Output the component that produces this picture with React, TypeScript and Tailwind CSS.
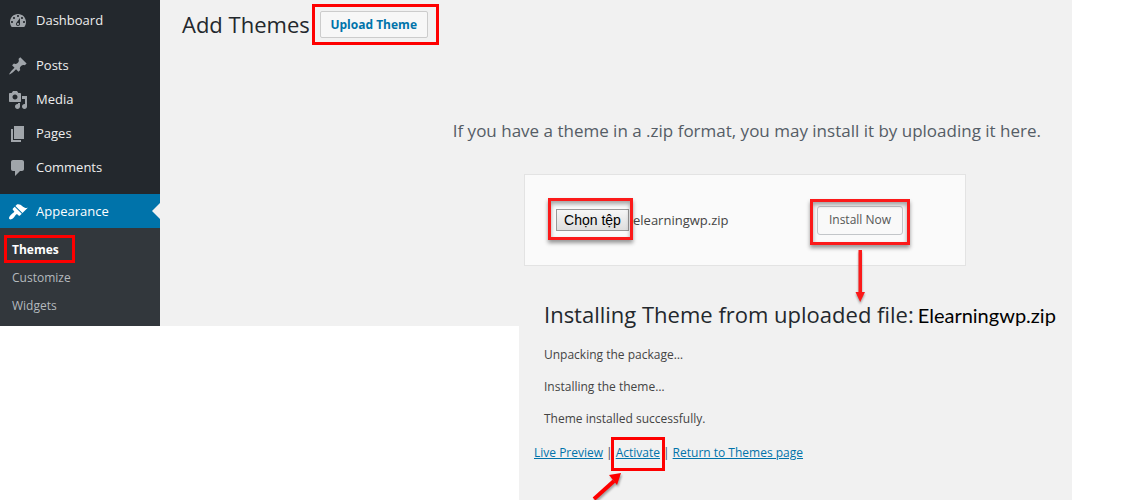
import { useRef } from 'react';
import type { ReactNode } from 'react';

const icons = {
  dashboard:
    'M3.76 16h12.48c1.1-1.37 1.76-3.11 1.76-5 0-4.42-3.58-8-8-8s-8 3.58-8 8c0 1.89.66 3.63 1.76 5zM10 4c.55 0 1 .45 1 1s-.45 1-1 1-1-.45-1-1 .45-1 1-1zM6 6c.55 0 1 .45 1 1s-.45 1-1 1-1-.45-1-1 .45-1 1-1zm8 0c.55 0 1 .45 1 1s-.45 1-1 1-1-.45-1-1 .45-1 1-1zm-5.37 5.55L12 7v6c0 1.1-.9 2-2 2s-2-.9-2-2c0-.57.24-1.08.63-1.45zM4 10c.55 0 1 .45 1 1s-.45 1-1 1-1-.45-1-1 .45-1 1-1zm12 0c.55 0 1 .45 1 1s-.45 1-1 1-1-.45-1-1 .45-1 1-1zm-5 3c0-.55-.45-1-1-1s-1 .45-1 1 .45 1 1 1 1-.45 1-1z',
  posts:
    'M10.44 3.02l1.82-1.82 6.36 6.35-1.83 1.82c-1.05-.68-2.48-.57-3.41.36l-.75.75c-.92.93-1.04 2.35-.35 3.41l-1.83 1.82-2.41-2.41-2.8 2.79c-.42.42-3.38 2.71-3.8 2.29s1.86-3.39 2.28-3.81l2.79-2.79L4.1 9.36l1.83-1.82c1.05.69 2.48.57 3.4-.36l.75-.75c.93-.92 1.05-2.35.36-3.41z',
  media:
    'M13 11V4c0-.55-.45-1-1-1h-1.67L9 1H5L3.67 3H2c-.55 0-1 .45-1 1v7c0 .55.45 1 1 1h10c.55 0 1-.45 1-1zM7 4.5c1.38 0 2.5 1.12 2.5 2.5S8.38 9.5 7 9.5 4.5 8.38 4.5 7 5.62 4.5 7 4.5zM14 6h5v10.5c0 1.38-1.12 2.5-2.5 2.5S14 17.88 14 16.5s1.12-2.5 2.5-2.5c.17 0 .34.02.5.05V9h-3V6zm-4 8.05V13h2v3.5c0 1.38-1.12 2.5-2.5 2.5S7 17.88 7 16.5 8.12 14 9.5 14c.17 0 .34.02.5.05z',
  pages: 'M6 15V2h10v13H6zm-1 1h8v2H3V5h2v11z',
  comments:
    'M5 2h9c1.1 0 2 .9 2 2v7c0 1.1-.9 2-2 2h-2l-5 5v-5H5c-1.1 0-2-.9-2-2V4c0-1.1.9-2 2-2z',
  appearance:
    'M14.48 11.06L7.41 3.99l1.5-1.5c.5-.56 2.3-.47 3.51.32 1.21.8 1.43 1.28 2.91 2.1 1.18.64 2.45 1.26 4.45.85zm-.71.71L6.7 4.7 4.93 6.47c-.39.39-.39 1.02 0 1.41l1.06 1.06c.39.39.39 1.03 0 1.42-.6.6-1.43 1.11-2.21 1.69-.35.26-.7.53-1.01.84C1.43 14.23.4 16.08 1.4 17.07c.99 1 2.84-.03 4.18-1.36.31-.31.58-.66.85-1.02.57-.78 1.08-1.61 1.69-2.21.39-.39 1.02-.39 1.41 0l1.06 1.06c.39.39 1.02.39 1.41 0z',
};

function MenuItem({ icon, active, children }: { icon: keyof typeof icons; active?: boolean; children: ReactNode }) {
  return (
    <li className={active ? 'relative bg-[#0073aa]' : ''}>
      <a
        href="#"
        className={`flex h-[34px] items-center gap-2 pl-2 text-[13px] ${active ? 'pt-0.5 text-white' : 'text-[#eee]'}`}
      >
        <svg viewBox="0 0 20 20" className={`size-5 ${active ? 'fill-white' : 'fill-[#a0a5aa]'}`} aria-hidden="true">
          <path d={icons[icon]} />
        </svg>
        {children}
      </a>
      {active && (
        <span className="absolute top-1/2 right-0 -translate-y-1/2 border-8 border-l-0 border-transparent border-r-[#f1f1f1]" />
      )}
    </li>
  );
}

/* Red marker frame laid over the control it wraps. */
function Marker({ place, shadow }: { place: string; shadow?: boolean }) {
  return (
    <span
      aria-hidden="true"
      className={`pointer-events-none absolute border-3 ${
        shadow
          ? 'border-[#fb1a1a] shadow-[0_3px_4px_rgba(0,0,0,0.4),inset_0_3px_4px_rgba(0,0,0,0.35)]'
          : 'border-[#fe0000]'
      } ${place}`}
    />
  );
}

function Sidebar() {
  return (
    <nav className="w-40 shrink-0 self-start bg-[#23282d] pt-1">
      <ul>
        <MenuItem icon="dashboard">Dashboard</MenuItem>
        <li className="h-[11px]" />
        <MenuItem icon="posts">Posts</MenuItem>
        <MenuItem icon="media">Media</MenuItem>
        <MenuItem icon="pages">Pages</MenuItem>
        <MenuItem icon="comments">Comments</MenuItem>
        <li className="h-[9px]" />
        <MenuItem icon="appearance" active>
          Appearance
        </MenuItem>
      </ul>
      <ul className="bg-[#32373c] pt-2 pb-1.5 text-xs leading-7 text-[#b4b9be]">
        <li className="relative h-7 pl-3">
          <a href="#" className="font-bold text-white">
            Themes
          </a>
          <Marker place="-top-px bottom-px left-1 w-[71px]" />
        </li>
        <li className="h-7 pl-3">
          <a href="#">Customize</a>
        </li>
        <li className="h-7 pl-3">
          <a href="#">Widgets</a>
        </li>
      </ul>
    </nav>
  );
}

function UploadForm() {
  const file = useRef<HTMLInputElement>(null);
  return (
    <form
      onSubmit={(e) => e.preventDefault()}
      className="mr-[106px] ml-auto flex h-[92px] w-[442px] items-center border border-[#e3e3e3] bg-[#fafafa] pl-[31px] text-[13px] text-[#444]"
    >
      <input ref={file} type="file" aria-label="Theme zip file" className="hidden" />
      <div className="relative">
        <button
          type="button"
          onClick={() => file.current?.click()}
          className="flex h-[22px] w-[73px] items-center justify-center border border-[#999] bg-linear-to-b from-[#f6f6f6] to-[#dedede] font-['Liberation_Sans',sans-serif] text-sm text-black"
        >
          Chọn tệp
        </button>
        <Marker shadow place="-top-[11px] -bottom-[9px] -left-2 -right-1" />
      </div>
      <span className="ml-1 pt-0.5">elearningwp.zip</span>
      <div className="relative mr-[62px] ml-auto">
        <button
          type="submit"
          className="flex h-[29px] w-[86px] items-center justify-center rounded-[3px] border border-[#c3c6c9] bg-[#f9f9f9] text-xs text-[#555]"
        >
          Install Now
        </button>
        <Marker shadow place="-top-[7px] -bottom-2.5 -inset-x-[7px]" />
        <svg
          viewBox="0 0 16 56"
          className="absolute top-full left-1/2 mt-3.5 h-14 w-4 -translate-x-1/2 drop-shadow-[0_2px_1px_rgba(0,0,0,0.35)]"
          aria-hidden="true"
        >
          <path d="M6.5 1h3.5v42h3L8.2 53 3.5 43h3z" fill="#fb1a1a" />
        </svg>
      </div>
    </form>
  );
}

const linkStyle = 'text-[#0073aa] underline';

function InstallLog() {
  return (
    <section className="min-h-[200px] flex-1 bg-[#f1f1f1] pl-[15px]">
      <h2 className="flex items-baseline gap-1 pl-2.5 text-[22px] leading-7 whitespace-nowrap text-[#23282d]">
        Installing Theme from uploaded file:
        <span className="font-['Lato',sans-serif] text-xl leading-6 font-normal text-black">Elearningwp.zip</span>
      </h2>
      <div className="flex flex-col gap-3 pt-[17px] pl-2.5 text-xs leading-5 text-[#444]">
        <p>Unpacking the package…</p>
        <p>Installing the theme…</p>
        <p>Theme installed successfully.</p>
      </div>
      <p className="flex gap-[3px] pt-3.5 text-xs leading-5 text-[#444]">
        <a href="#" className={linkStyle}>
          Live Preview
        </a>
        |
        <span className="relative">
          <a href="#" className={linkStyle}>
            Activate
          </a>
          <Marker place="-top-[6px] -bottom-2 -inset-x-[5px]" />
          <svg
            viewBox="0 0 34 34"
            className="absolute top-full right-full -mr-2 mt-2 size-[34px] drop-shadow-[1px_2px_1px_rgba(0,0,0,0.35)]"
            aria-hidden="true"
          >
            <path d="M4 28 24 10" stroke="#fe0000" strokeWidth="4" />
            <path d="M31 2 19 4l8 10z" fill="#fe0000" />
          </svg>
        </span>
        |
        <a href="#" className={linkStyle}>
          Return to Themes page
        </a>
      </p>
    </section>
  );
}

export default function App() {
  return (
    <div className="flex overflow-hidden bg-white pr-[50px] font-['Open_Sans','Noto_Sans',sans-serif]">
      <Sidebar />
      <main className="min-w-0 flex-1">
        <div className="h-[300px] bg-[#f1f1f1]">
          <header className="flex h-12 items-center gap-2.5 pl-[22px]">
            <h1 className="text-[22px] leading-7 text-[#23282d]">Add Themes</h1>
            <div className="relative">
              <button
                type="button"
                className="flex h-[27px] w-[108px] items-center justify-center rounded-[2px] border border-[#ccc] bg-[#f7f7f7] pt-0.5 text-xs font-bold text-[#0073aa]"
              >
                Upload Theme
              </button>
              <Marker place="-top-[7px] -bottom-[7px] -left-2 -right-[11px]" />
            </div>
          </header>
          <p className="pt-[71px] pr-[31px] pb-[31px] text-right text-[17px] leading-6 text-[#555d66]">
            If you have a theme in a .zip format, you may install it by uploading it here.
          </p>
          <UploadForm />
        </div>
        <div className="flex items-start">
          <div className="h-[26px] w-[359px] shrink-0 bg-[#f1f1f1]" />
          <InstallLog />
        </div>
      </main>
    </div>
  );
}
